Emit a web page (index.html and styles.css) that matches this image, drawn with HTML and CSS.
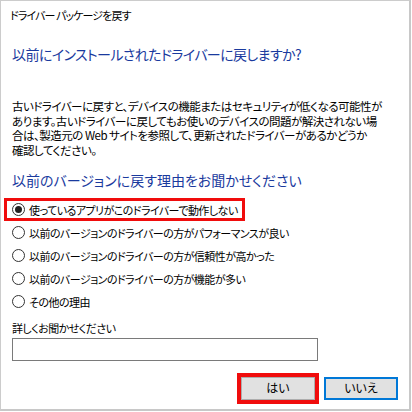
FILE: index.html
```html
<!DOCTYPE html>
<html lang="ja">
<head>
<meta charset="utf-8">
<title>ドライバー パッケージを戻す</title>
<link rel="stylesheet" href="styles.css">
</head>
<body>
<div class="dialog">
  <div class="title">ドライバー パッケージを戻す</div>
  <div class="content">
    <h1 class="heading main">以前にインストールされたドライバーに戻しますか?</h1>
    <p class="desc">古いドライバーに戻すと、デバイスの機能またはセキュリティが低くなる可能性が<br>あります。古いドライバーに戻してもお使いのデバイスの問題が解決されない場<br>合は、製造元の Web サイトを参照して、更新されたドライバーがあるかどうか<br>確認してください。</p>
    <h2 class="heading sub">以前のバージョンに戻す理由をお聞かせください</h2>
    <ul class="radios">
      <li class="row"><span class="opt hl"><span class="radio checked"></span><span>使っているアプリがこのドライバーで動作しない</span></span></li>
      <li class="row"><span class="opt"><span class="radio"></span><span>以前のバージョンのドライバーの方がパフォーマンスが良い</span></span></li>
      <li class="row"><span class="opt"><span class="radio"></span><span>以前のバージョンのドライバーの方が信頼性が高かった</span></span></li>
      <li class="row"><span class="opt"><span class="radio"></span><span>以前のバージョンのドライバーの方が機能が多い</span></span></li>
      <li class="row"><span class="opt"><span class="radio"></span><span>その他の理由</span></span></li>
    </ul>
    <div class="label">詳しくお聞かせください</div>
    <div class="input"></div>
    <div class="buttons">
      <div class="btn yes">はい</div>
      <div class="btn no">いいえ</div>
    </div>
  </div>
</div>
</body>
</html>
```
FILE: styles.css
```css
html, body {
  margin: 0;
  padding: 0;
  background: #fff;
}
body {
  font-family: "Noto Sans CJK JP", "Noto Sans", sans-serif;
  font-feature-settings: "palt";
  color: #000;
  font-size: 12px;
}
.dialog {
  box-sizing: border-box;
  width: 411px;
  height: 411px;
  border-top: 1px solid #cccccc;
  border-left: 1px solid #cccccc;
  border-right: 2px solid #c8c8c8;
  border-bottom: 2px solid #c8c8c8;
  background: #fff;
}
.title {
  margin-top: 6px;
  padding-left: 9px;
  line-height: 16px;
  font-size: 11px;
  letter-spacing: -0.9px;
}
.content {
  padding: 0 11px;
}
.heading {
  margin: 20.5px 0 0;
  font-size: 14px;
  font-weight: 400;
  line-height: 20px;
  color: #1a3a9e;
}
.main {
  letter-spacing: -0.6px;
}
.desc {
  margin: 35.75px 0 0;
  line-height: 14.5px;
  font-size: 11.5px;
  letter-spacing: -0.5px;
  white-space: nowrap;
}
.sub {
  margin-top: 12.25px;
  letter-spacing: 0;
}
.radios {
  list-style: none;
  margin: 8.7px 0 0;
  padding: 0;
}
.row {
  height: 23px;
  display: flex;
  align-items: center;
}
.opt {
  position: relative;
  display: inline-flex;
  align-items: center;
  gap: 4px;
  line-height: 16px;
  font-size: 11px;
  letter-spacing: -0.55px;
}
.hl::after {
  content: "";
  position: absolute;
  left: -8px;
  right: -7px;
  top: -3.5px;
  bottom: -3.5px;
  border: 3px solid #f00c0c;
}
.radio {
  box-sizing: border-box;
  width: 13px;
  height: 13px;
  border: 1px solid #333;
  border-radius: 50%;
  display: inline-flex;
  align-items: center;
  justify-content: center;
  flex: none;
}
.radio.checked::before {
  content: "";
  width: 7px;
  height: 7px;
  border-radius: 50%;
  background: #222;
}
.label {
  margin-top: 6.8px;
  line-height: 16px;
  font-size: 11px;
  letter-spacing: -0.55px;
}
.input {
  box-sizing: border-box;
  margin-top: 2px;
  width: 306px;
  height: 23px;
  border: 1px solid #7a7a7a;
}
.buttons {
  margin-top: 16px;
  display: flex;
  justify-content: flex-end;
  gap: 9px;
}
.btn {
  position: relative;
  box-sizing: border-box;
  width: 74px;
  height: 23px;
  background: #e1e1e1;
  display: flex;
  align-items: center;
  justify-content: center;
  line-height: 16px;
  font-size: 12px;
}
.yes {
  border: 1px solid #adadad;
}
.yes::after {
  content: "";
  position: absolute;
  left: -5px;
  right: -5px;
  top: -5px;
  bottom: -5px;
  border: 4px solid #f00c0c;
}
.no {
  border: 2px solid #0078d7;
}
```
